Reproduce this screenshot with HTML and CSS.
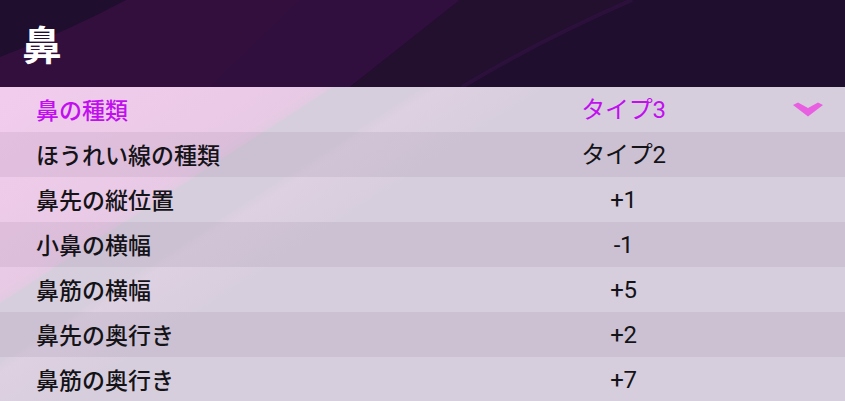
FILE: index.html
```html
<!DOCTYPE html>
<html lang="ja">
<head>
<meta charset="utf-8">
<link rel="stylesheet" href="styles.css">
</head>
<body>
<div class="panel">
  <header class="head">
    <svg class="head-bg" width="845" height="87" viewBox="0 0 845 87" aria-hidden="true">
      <rect width="845" height="87" fill="#1f0e2e"/>
      <path d="M126 0 L460 0 L350 87 L0 87 L0 57 Q70 30 126 0 Z" fill="#330f3e"/>
      <path d="M300 0 L460 0 L350 87 L210 87 Z" fill="#2e0f3f" opacity="0.6"/>
      <path d="M460 0 L630 0 Q540 40 462 87 L350 87 Z" fill="#22102e"/>
      <path d="M632 0 Q540 40 462 87" stroke="#2f1140" stroke-width="4" fill="none" opacity="0.8"/>
    </svg>
    <h1 class="title">鼻</h1>
  </header>
  <div class="list">
    <div class="row selected">
      <span class="label">鼻の種類</span>
      <span class="value">タイプ3</span>
      <svg class="chev" width="32" height="16" viewBox="0 0 32 16" aria-hidden="true">
        <path d="M1 3 L6 0.5 L16 6 L26 0.5 L31 3 L16 14.5 Z" fill="#e85fe2"/>
      </svg>
    </div>
    <div class="row"><span class="label">ほうれい線の種類</span><span class="value">タイプ2</span></div>
    <div class="row"><span class="label">鼻先の縦位置</span><span class="value">+1</span></div>
    <div class="row"><span class="label">小鼻の横幅</span><span class="value">-1</span></div>
    <div class="row"><span class="label">鼻筋の横幅</span><span class="value">+5</span></div>
    <div class="row"><span class="label">鼻先の奥行き</span><span class="value">+2</span></div>
    <div class="row"><span class="label">鼻筋の奥行き</span><span class="value">+7</span></div>
  </div>
</div>
</body>
</html>
```
FILE: styles.css
```css
html, body {
  margin: 0;
  padding: 0;
}
body {
  width: 845px;
  height: 401px;
  overflow: hidden;
  background: #d7cedd;
  font-family: "Noto Sans CJK JP", "Noto Sans", sans-serif;
}
.panel {
  display: flex;
  flex-direction: column;
  width: 845px;
}
.head {
  position: relative;
  height: 87px;
  display: flex;
  align-items: center;
  padding-left: 22px;
  box-sizing: border-box;
}
.head-bg {
  position: absolute;
  left: 0;
  top: 0;
  display: block;
}
.title {
  position: relative;
  margin: 0 0 2px 0;
  font-size: 40px;
  font-weight: 700;
  color: #ffffff;
  line-height: 1;
}
.list {
  display: flex;
  flex-direction: column;
  background:
    linear-gradient(147deg, rgba(244, 204, 238, 0.95) 0px, rgba(238, 200, 232, 0.75) 170px, rgba(235, 200, 230, 0.55) 180px, rgba(235, 200, 230, 0) 182px),
    linear-gradient(147deg, rgba(255, 255, 255, 0) 230px, rgba(236, 214, 236, 0.3) 240px, rgba(255, 255, 255, 0) 300px),
    #d7cedd;
}
.row {
  position: relative;
  height: 45px;
  display: grid;
  grid-template-columns: 368px 441px;
  align-items: center;
  padding-left: 36px;
  color: #141318;
}
.row:nth-child(even) {
  background: rgba(70, 45, 85, 0.075);
}
.label {
  white-space: nowrap;
  line-height: 1;
  font-size: 23px;
  font-weight: 500;
}
.value {
  text-align: center;
  line-height: 1;
  font-family: "Roboto", "Noto Sans CJK JP", sans-serif;
  font-size: 24px;
  font-weight: 400;
  letter-spacing: -0.3px;
  padding-right: 2px;
}
.selected {
  color: #c10ff0;
}
.chev {
  position: absolute;
  right: 21px;
  top: 15px;
}
```
